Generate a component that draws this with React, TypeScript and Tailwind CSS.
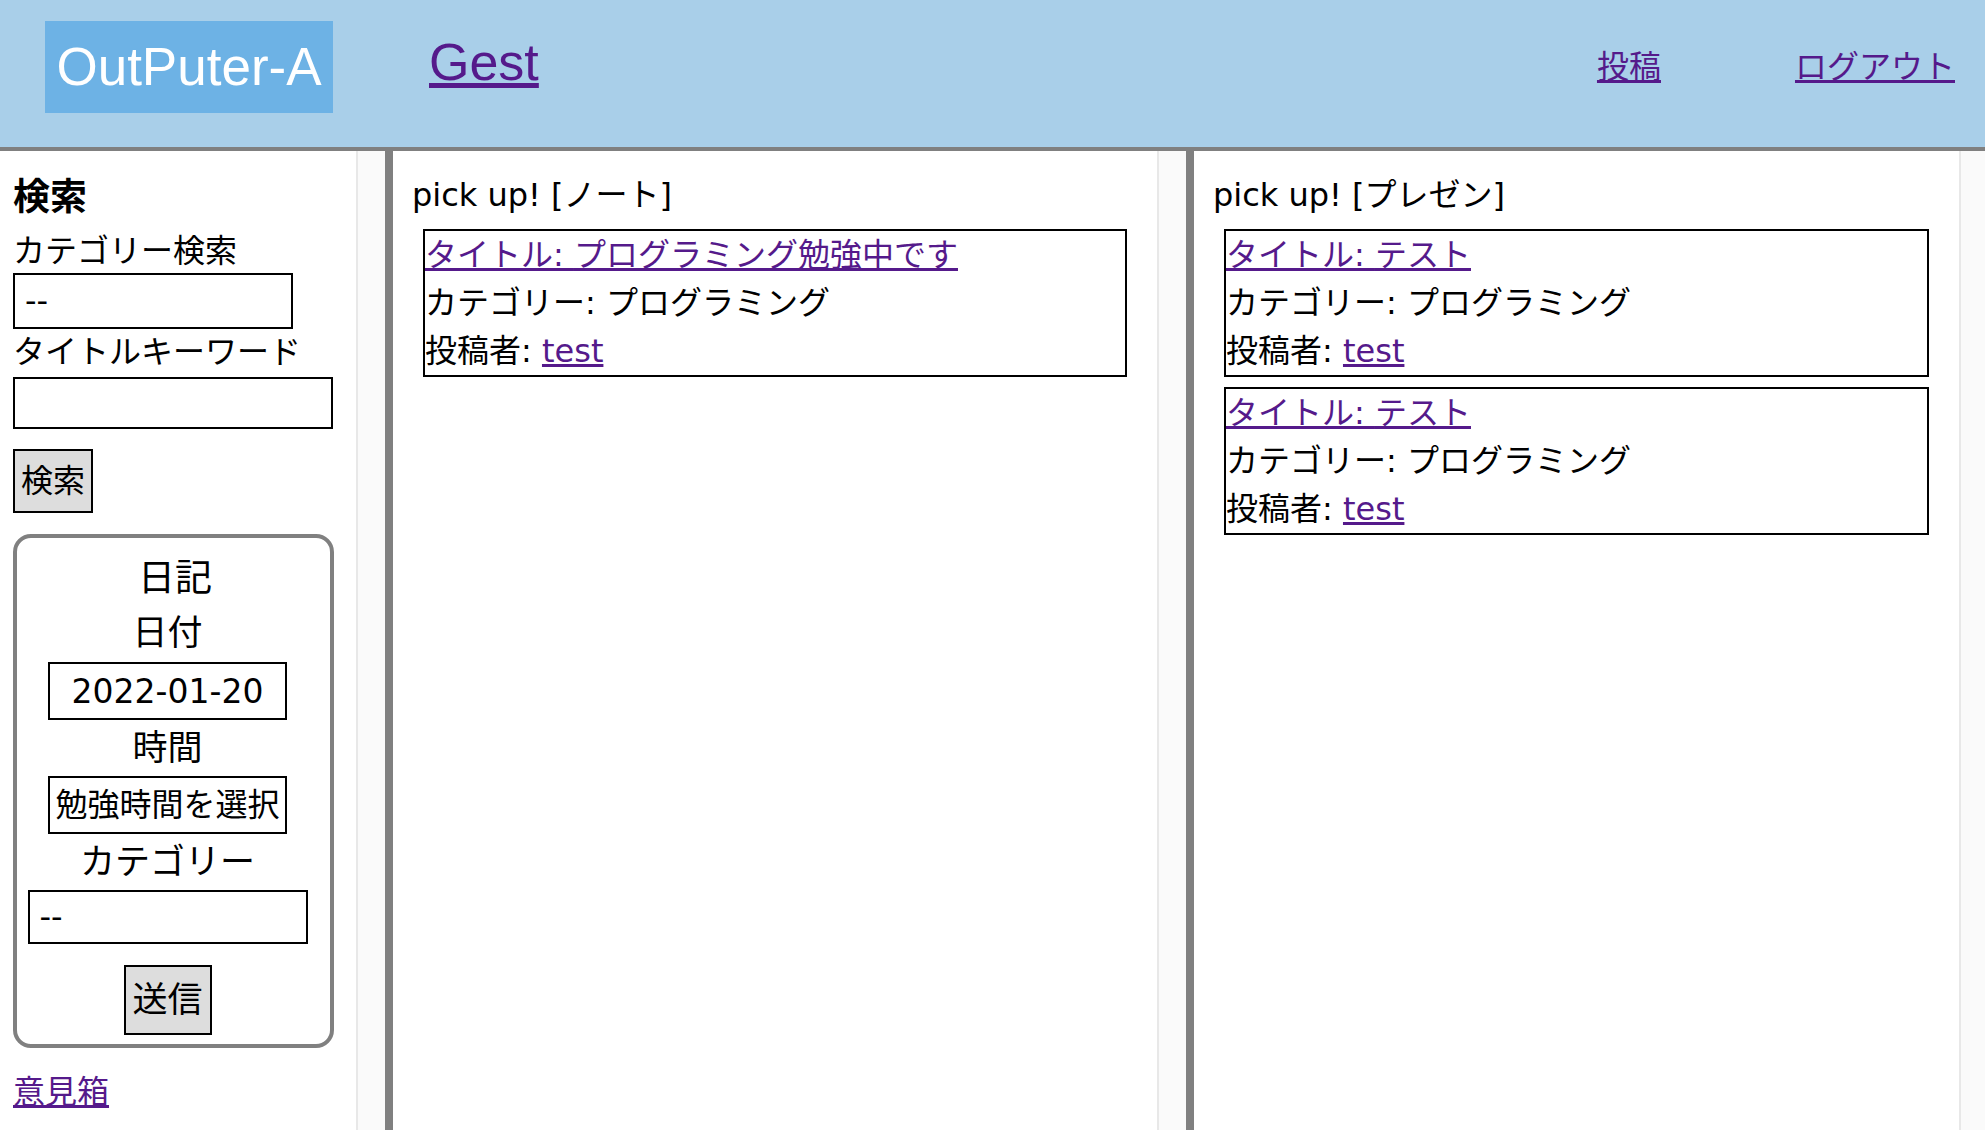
import React from "react";

type Post = { title: string; category: string; author: string };

const notes: Post[] = [
  { title: "プログラミング勉強中です", category: "プログラミング", author: "test" },
];

const presentations: Post[] = [
  { title: "テスト", category: "プログラミング", author: "test" },
  { title: "テスト", category: "プログラミング", author: "test" },
];

function Scrollbar() {
  return <div className="w-[29px] shrink-0 border-l-2 border-[#e8e8e8] bg-[#fafafa]" />;
}

function Divider() {
  return <div className="w-[8px] shrink-0 bg-[#808080]" />;
}

function PickUp({ label, posts, wide }: { label: string; posts: Post[]; wide?: boolean }) {
  return (
    <section className={`${wide ? "min-w-0 flex-1" : "w-[764px] shrink-0"} pl-[19px] pr-[18px] pt-[20px]`}>
      <p className="text-[32px] leading-[48px]">pick up! [{label}]</p>
      {posts.map((post, i) => (
        <div key={i} className="ml-[11px] mr-[12px] mt-[10px] border-2 border-black text-[32px] leading-[48px]">
          <p>
            <a href="#" className="text-[#551a8b] underline">
              タイトル: {post.title}
            </a>
          </p>
          <p>カテゴリー: {post.category}</p>
          <p>
            投稿者:{" "}
            <a href="#" className="text-[#551a8b] underline">
              {post.author}
            </a>
          </p>
        </div>
      ))}
    </section>
  );
}

function Sidebar() {
  return (
    <aside className="w-[356px] shrink-0 pl-[13px]">
      <h3 className="mt-[23px] text-[37px] font-bold leading-[48px]">検索</h3>
      <p className="mt-[9px] text-[32px] leading-[40px]">カテゴリー検索</p>
      <select className="mt-[2px] block h-[56px] w-[280px] appearance-none rounded-none border-2 border-black bg-white px-[10px] text-[32px]">
        <option>--</option>
      </select>
      <p className="mt-[3px] text-[32px] leading-[40px]">タイトルキーワード</p>
      <input className="mt-[5px] block h-[52px] w-[320px] border-2 border-black bg-white px-[10px] text-[32px]" />
      <button className="mt-[20px] block h-[64px] w-[80px] border-2 border-black bg-[#dddddd] text-[32px] leading-none">
        検索
      </button>

      {/* 日記 */}
      <div className="mt-[21px] flex h-[514px] w-[321px] flex-col items-center rounded-[18px] border-4 border-[#808080] pr-[12px] pt-[15px]">
        <h3 className="pl-[15px] text-[37px] leading-[52px]">日記</h3>
        <p className="text-[35px] leading-[57px]">日付</p>
        <input
          defaultValue="2022-01-20"
          className="block h-[58px] w-[239px] border-2 border-black bg-white text-center text-[33px]"
        />
        <p className="text-[35px] leading-[56px]">時間</p>
        <button className="h-[58px] w-[239px] border-2 border-black bg-white text-[32px] leading-none">
          勉強時間を選択
        </button>
        <p className="text-[35px] leading-[56px]">カテゴリー</p>
        <select className="block h-[54px] w-[280px] appearance-none rounded-none border-2 border-black bg-white px-[10px] text-[32px]">
          <option>--</option>
        </select>
        <button className="mt-[21px] h-[70px] w-[88px] border-2 border-black bg-[#dddddd] text-[35px] leading-none">
          送信
        </button>
      </div>

      <a href="#" className="mt-[24px] block w-fit text-[32px] leading-[40px] text-[#551a8b] underline">
        意見箱
      </a>
    </aside>
  );
}

export default function App() {
  return (
    <div className="flex h-screen flex-col overflow-hidden bg-white text-black font-['DejaVu_Sans','Noto_Sans_CJK_JP',sans-serif]">
      <header className="flex h-[151px] shrink-0 items-start border-b-4 border-[#808080] bg-[#a9cfe9] font-['Liberation_Sans','Noto_Sans_CJK_JP',sans-serif]">
        <div className="ml-[45px] mt-[21px] flex h-[92px] w-[288px] items-center justify-center bg-[#6db2e5] text-[53px] text-white">
          OutPuter-A
        </div>
        <a href="#" className="ml-[96px] mt-[32px] text-[52px] leading-[60px] text-[#551a8b] underline">
          Gest
        </a>
        <nav className="ml-auto mt-[47px] flex gap-[134px] pr-[30px] text-[32px] leading-[40px]">
          <a href="#" className="text-[#551a8b] underline">
            投稿
          </a>
          <a href="#" className="text-[#551a8b] underline">
            ログアウト
          </a>
        </nav>
      </header>

      <div className="flex min-h-0 flex-1">
        <Sidebar />
        <Scrollbar />
        <Divider />
        <PickUp label="ノート" posts={notes} />
        <Scrollbar />
        <Divider />
        <PickUp label="プレゼン" posts={presentations} wide />
        <div className="w-[26px] shrink-0 border-l-2 border-[#e8e8e8] bg-[#fafafa]" />
      </div>
    </div>
  );
}
